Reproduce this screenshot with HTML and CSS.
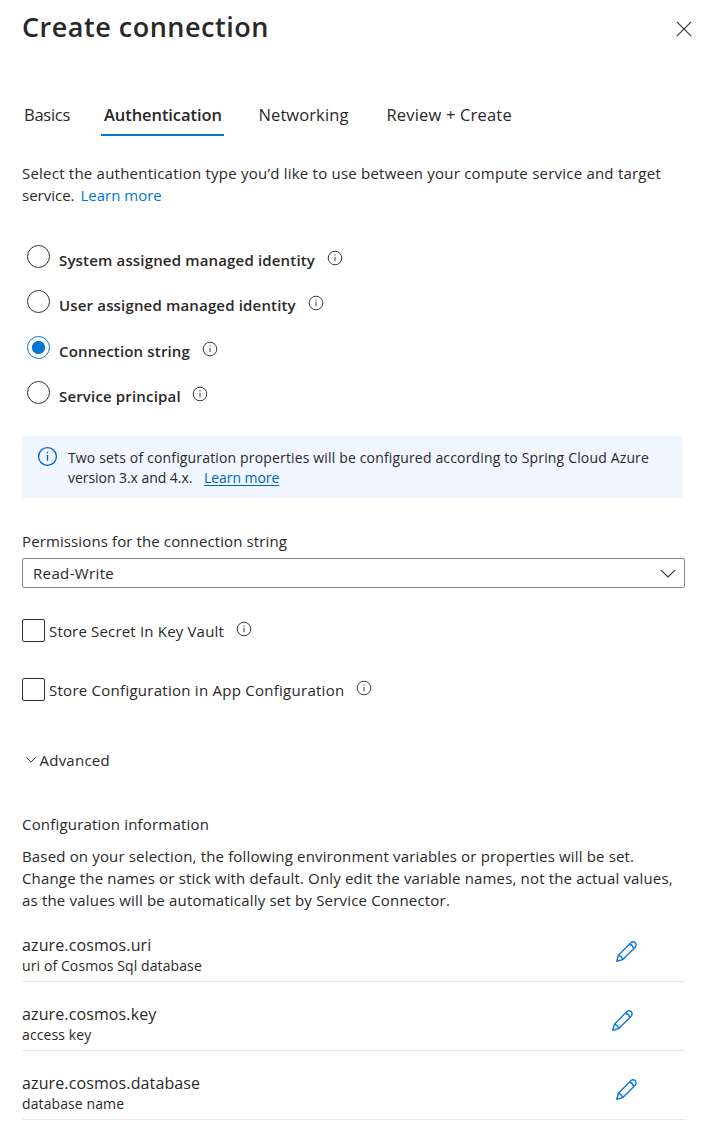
FILE: index.html
```
<!DOCTYPE html>
<html lang="en">
<head>
<meta charset="utf-8">
<title>Create connection</title>
<link rel="stylesheet" href="styles.css">
</head>
<body>
<svg width="0" height="0" class="defs">
  <symbol id="info" viewBox="0 0 16 16"><circle cx="8" cy="8" r="6.8" fill="none" stroke="currentColor" stroke-width="1"/><path d="M8 6.8V11.2M8 4.4V5.5" stroke="currentColor" stroke-width="1" fill="none"/></symbol>
  <symbol id="pencil" viewBox="0 0 21 21"><path d="M.8 20.2 2.4 14.2 14.8 1.8Q17.2-.2 19.3 1.7Q21 3.8 19.2 6.2L6.8 18.6ZM13.4 3.3Q16.8 4 17.7 7.6M2.4 14.2Q5.6 15.2 6.8 18.6" fill="none" stroke="currentColor" stroke-width="1.4" stroke-linejoin="round"/></symbol>
</svg>
<main class="panel">
  <header class="header">
    <h1 class="title">Create connection</h1>
    <button class="close" aria-label="Close"><svg width="16" height="16" viewBox="0 0 16 16"><path d="M.8.8 15.2 15.2M15.2.8.8 15.2" stroke="#323130" stroke-width="1.1"/></svg></button>
  </header>
  <nav class="tabs">
    <a class="tab basics">Basics</a>
    <a class="tab active">Authentication</a>
    <a class="tab networking">Networking</a>
    <a class="tab review">Review + Create</a>
  </nav>
  <p class="intro"><span class="line wide">Select the authentication type you’d like to use between your compute service and target</span><span class="line plain">service. <a class="link">Learn more</a></span></p>
  <div class="radios">
    <div class="radio"><span class="circle"></span><span class="radio-label">System assigned managed identity</span><svg class="info"><use href="#info"/></svg></div>
    <div class="radio"><span class="circle"></span><span class="radio-label">User assigned managed identity</span><svg class="info"><use href="#info"/></svg></div>
    <div class="radio"><span class="circle checked"></span><span class="radio-label">Connection string</span><svg class="info"><use href="#info"/></svg></div>
    <div class="radio"><span class="circle"></span><span class="radio-label">Service principal</span><svg class="info"><use href="#info"/></svg></div>
  </div>
  <div class="notice">
    <svg class="notice-icon"><use href="#info"/></svg>
    <p class="notice-text"><span class="line">Two sets of configuration properties will be configured according to Spring Cloud Azure</span><span class="line tight">version 3.x and 4.x. <a class="notice-link">Learn more</a></span></p>
  </div>
  <div class="field">
    <label class="field-label">Permissions for the connection string</label>
    <div class="select"><span class="select-value">Read-Write</span><svg width="16" height="9" viewBox="0 0 16 9"><path d="M.7.8 8 8 15.3.8" fill="none" stroke="#323130" stroke-width="1.1"/></svg></div>
  </div>
  <div class="checks">
    <div class="check"><span class="box"></span><span class="check-label">Store Secret In Key Vault</span><svg class="info"><use href="#info"/></svg></div>
    <div class="check"><span class="box"></span><span class="check-label long">Store Configuration in App Configuration</span><svg class="info"><use href="#info"/></svg></div>
  </div>
  <div class="advanced"><svg width="10" height="6" viewBox="0 0 10 6"><path d="M.4.5 5 5.1 9.6.5" fill="none" stroke="#323130"/></svg><span>Advanced</span></div>
  <section class="config">
    <h2 class="config-title">Configuration information</h2>
    <p class="config-text"><span class="line">Based on your selection, the following environment variables or properties will be set.</span><span class="line">Change the names or stick with default. Only edit the variable names, not the actual values,</span><span class="line last">as the values will be automatically set by Service Connector.</span></p>
    <ul class="items">
      <li class="item"><div><div class="name">azure.cosmos.uri</div><div class="desc">uri of Cosmos Sql database</div></div><svg class="pencil"><use href="#pencil"/></svg></li>
      <li class="item shifted"><div><div class="name">azure.cosmos.key</div><div class="desc">access key</div></div><svg class="pencil"><use href="#pencil"/></svg></li>
      <li class="item"><div><div class="name">azure.cosmos.database</div><div class="desc">database name</div></div><svg class="pencil"><use href="#pencil"/></svg></li>
    </ul>
  </section>
</main>
</body>
</html>
```
FILE: styles.css
```
* { box-sizing: border-box; }
body { margin: 0; background: #fff; color: #292827; font: 15px/22px "Open Sans", "Noto Sans", sans-serif; }
.defs { display: block; height: 0; }
.panel { height: 1131px; padding: 6px 21px 0 22px; overflow: hidden; }
h1, h2, p, ul { margin: 0; padding: 0; font-weight: 400; font-size: inherit; }
svg { display: block; flex: none; overflow: visible; }
.line { display: block; white-space: nowrap; }

.header { display: flex; justify-content: space-between; height: 41px; }
.title { font-size: 27px; line-height: 41px; font-weight: 600; letter-spacing: .51px; }
.close { border: 0; background: none; padding: 15px 0 0; margin-right: -6.5px; height: 30px; }

.tabs { display: flex; margin-top: 56px; height: 33px; font-size: 16.5px; line-height: 24px; white-space: nowrap; }
.tab { padding: 0 3px; }
.basics { width: 79px; padding-left: 2px; letter-spacing: -.27px; }
.active { width: 123px; border-bottom: 2px solid #0078d4; font-weight: 600; letter-spacing: -.08px; }
.networking { margin-left: 31.5px; width: 128px; letter-spacing: .1px; }
.review { letter-spacing: .18px; }

.intro { margin-top: 26px; }
.wide { letter-spacing: .222px; }
.link { margin-left: 2px; color: #0078d4; }

.radios { display: flex; flex-direction: column; margin-top: 39px; }
.radio { display: flex; height: 45.33px; padding-left: 5px; }
.circle { width: 23px; height: 23px; border: 1px solid #323130; border-radius: 50%; }
.checked { border-color: #0078d4; background: radial-gradient(circle, #0078d4 6.2px, transparent 6.9px); }
.radio-label { margin: 4px 13px 0 9px; font-weight: 600; letter-spacing: .165px; }
.info { width: 16px; height: 16px; margin-top: 5px; color: #3b3a39; }
.radio .info { margin-left: -1.3px; }

.notice { display: flex; margin-top: 9.7px; width: 661px; height: 62px; padding: 10px 15px; background: #eff6ff; }
.notice-icon { width: 21px; height: 21px; color: #015cda; }
.notice-text { margin: 2px 0 0 10px; font-size: 14px; line-height: 20px; letter-spacing: .156px; }
.tight { letter-spacing: -.05px; }
.notice-link { margin-left: 8px; color: #0065b3; text-decoration: underline; text-underline-offset: 2px; }

.field { margin-top: 32px; }
.field-label { display: block; height: 28px; letter-spacing: .114px; }
.select { display: flex; align-items: center; justify-content: space-between; height: 30px; padding: 0 8.5px 0 10px; border: 1px solid #8a8886; border-radius: 2px; }
.select-value { letter-spacing: .36px; }

.checks { margin-top: 31px; }
.check { display: flex; height: 59px; }
.box { width: 23px; height: 23px; border: 1px solid #323130; border-radius: 2px; }
.check-label { margin: 1px 11.5px 0 4px; letter-spacing: .176px; }
.long { letter-spacing: .262px; }
.check .info { margin-top: 2px; }

.advanced { display: flex; align-items: center; gap: 3.5px; height: 22px; margin-top: 12px; padding-left: 4px; letter-spacing: .24px; }
.config { margin-top: 42px; }
.config-title { letter-spacing: .19px; }
.config-text { margin-top: 10px; letter-spacing: .16px; }
.last { letter-spacing: .188px; }
.items { list-style: none; margin-top: 13px; }
.item { display: flex; justify-content: space-between; height: 69px; padding: 20px 48.5px 0 0; border-bottom: 1px solid #e8e8e8; }
.item:first-child { height: 58px; padding-top: 9px; }
.shifted.item { padding-right: 52.5px; }
.name { font-size: 16px; line-height: 24px; letter-spacing: .12px; }
.desc { font-size: 14px; line-height: 18px; letter-spacing: .1px; }
.pencil { width: 21px; height: 21px; margin-top: 8px; color: #0f78d6; }
```
